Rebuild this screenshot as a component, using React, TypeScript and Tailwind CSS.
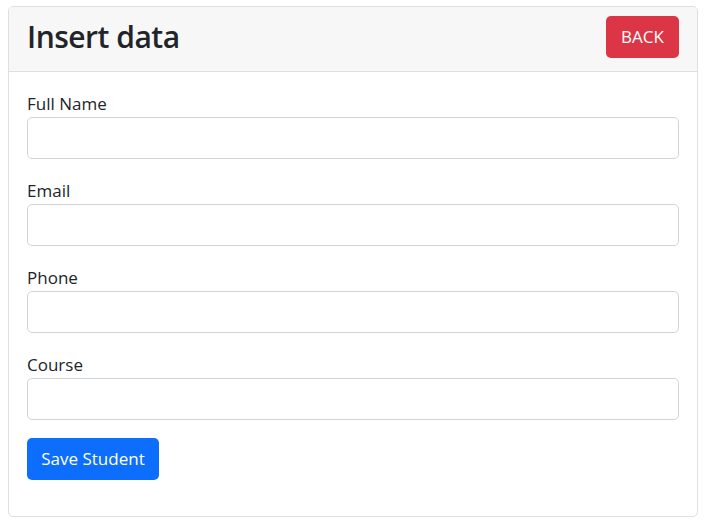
export default function App() {
  const fields = ["Full Name", "Email", "Phone", "Course"];

  return (
    <div className="min-h-screen bg-white pl-[8px] pt-[6px] font-['Open_Sans',sans-serif] text-[#212529]">
      <div className="flex h-[511px] w-[690px] flex-col overflow-hidden rounded-[5px] border border-[#dfdfdf]">
        <div className="flex h-[65px] items-start justify-between border-b border-[#dfdfdf] bg-[#f7f7f7] px-[18px]">
          <h2 className="mt-[10px] text-[30px] leading-[40px] font-semibold tracking-[-0.5px]">
            Insert data
          </h2>
          <button
            type="button"
            className="mt-[9px] h-[42px] w-[73px] rounded-[5px] bg-[#dc3545] text-[17px] text-white"
          >
            BACK
          </button>
        </div>
        <form className="flex flex-col px-[18px] pt-[18px]">
          {fields.map((f) => (
            <div key={f} className="mb-[18px] flex flex-col">
              <label className="block h-[27px] text-[17px] leading-[27px]">
                {f}
              </label>
              <input
                type="text"
                className="h-[42px] w-full rounded-[5px] border border-[#ced4da] bg-white px-3 outline-none"
              />
            </div>
          ))}
          <button
            type="submit"
            className="h-[42px] w-[132px] rounded-[5px] bg-[#0d6efd] text-[17px] text-white"
          >
            Save Student
          </button>
        </form>
      </div>
    </div>
  );
}
